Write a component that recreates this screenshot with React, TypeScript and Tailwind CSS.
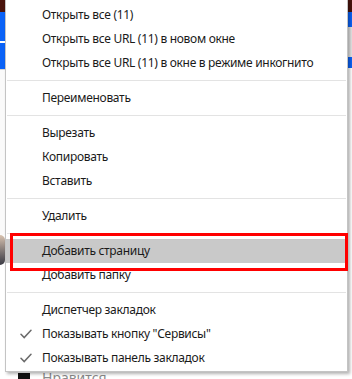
import { Fragment } from "react";

type Entry = { label: string; checked?: boolean; active?: boolean } | "sep";

const MENU: Entry[] = [
  { label: "Открыть все (11)" },
  { label: "Открыть все URL (11) в новом окне" },
  { label: "Открыть все URL (11) в окне в режиме инкогнито" },
  "sep",
  { label: "Переименовать" },
  "sep",
  { label: "Вырезать" },
  { label: "Копировать" },
  { label: "Вставить" },
  "sep",
  { label: "Удалить" },
  "sep",
  { label: "Добавить страницу", active: true },
  { label: "Добавить папку" },
  "sep",
  { label: "Диспетчер закладок" },
  { label: 'Показывать кнопку "Сервисы"', checked: true },
  { label: "Показывать панель закладок", checked: true },
];

function CheckMark() {
  return (
    <svg width="12" height="10" viewBox="0 0 12 10" fill="none">
      <path d="M1 5.2 L4.2 8.6 L11 1.2" stroke="#6b6b6b" strokeWidth="1.5" strokeLinecap="round" />
    </svg>
  );
}

function MenuRow({ label, checked, active }: { label: string; checked?: boolean; active?: boolean }) {
  return (
    <div className={`relative flex items-center h-[24px] ${active ? "bg-[#c9c9c9]" : ""}`}>
      <div className="w-[36px] flex justify-center pl-[4px]">{checked && <CheckMark />}</div>
      <span className="text-[12px] tracking-[-0.3px] text-[#1a1a1a] whitespace-nowrap">{label}</span>
    </div>
  );
}

export default function App() {
  return (
    <div
      className="relative w-[352px] h-[379px] overflow-hidden bg-white"
      style={{ fontFamily: '"Noto Sans", "Open Sans", sans-serif' }}
    >
      {/* page behind the popup */}
      <div className="flex h-full">
        <div className="w-[5px] flex flex-col">
          <div className="h-[12px] bg-[#4a140c]" />
          <div className="h-[29px] bg-[#0a62f7]" />
          <div className="h-[2px] bg-white" />
          <div className="h-[26px] bg-[#0a62f7]" />
          <div className="h-[1px] bg-[#d6d6d6]" />
          <div className="h-[165px] bg-[#fafafa]" />
          <div className="h-[30px] rounded-r-full bg-gradient-to-b from-[#d9c3b0] to-[#3b3b44]" />
          <div className="flex-1 bg-white" />
        </div>
        <div className="flex-1 flex flex-col justify-end">
          <div className="flex items-start gap-[12px] pl-[13px] h-[8px] overflow-hidden">
            <div className="w-[12px] h-[12px] mt-[2px] bg-[#111]" />
            <span className="text-[14px] leading-[14px] text-[#8a8a8a]">Нравится</span>
          </div>
        </div>
        <div className="w-[4px] flex flex-col">
          <div className="h-[12px] bg-[#4a140c]" />
          <div className="h-[15px] bg-[#0a62f7]" />
          <div className="h-[30px] bg-[#e4e4e4]" />
          <div className="h-[11px] bg-[#0a62f7]" />
          <div className="flex-1 bg-white" />
        </div>
      </div>

      {/* context menu */}
      <div className="absolute left-[5px] top-[-2px] w-[343px] bg-white border border-[#c4c4c4] shadow-[2px_2px_3px_rgba(0,0,0,0.3)] pt-[4px] pb-[1px]">
        {MENU.map((e, i) =>
          e === "sep" ? (
            <div key={i} className="h-[11px] flex items-center px-[1px]">
              <div className="h-[1px] w-full bg-[#e3e3e3]" />
            </div>
          ) : (
            <Fragment key={i}>
              <MenuRow label={e.label} checked={e.checked} active={e.active} />
            </Fragment>
          )
        )}
      </div>

      {/* red annotation frame */}
      <div className="absolute left-[10px] top-[233px] w-[338px] h-[38px] border-[3px] border-[#ff0000]" />
    </div>
  );
}
